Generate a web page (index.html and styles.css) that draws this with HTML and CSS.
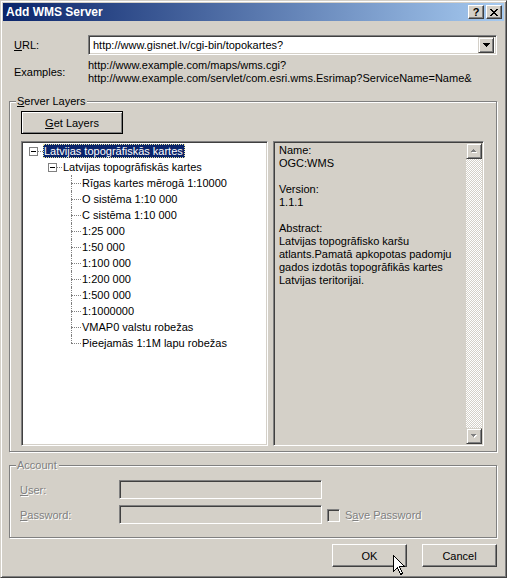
FILE: index.html
```html
<!DOCTYPE html>
<html>
<head>
<meta http-equiv="Content-Type" content="text/html; charset=UTF-8" />
<link rel="stylesheet" href="styles.css">
</head>

<body>

<div id="window">
	<div id="title-bar">
		<span id="title">Add WMS Server</span>
		<span class="title-button help-button">?</span>
		<span class="title-button">
			<svg width="8" height="7" viewBox="0 0 8 7" shape-rendering="crispEdges"><path d="M0 0h2v1h-2zM6 0h2v1h-2zM1 1h2v1h-2zM5 1h2v1h-2zM2 2h4v1h-4zM3 3h2v1h-2zM2 4h4v1h-4zM1 5h2v1h-2zM5 5h2v1h-2zM0 6h2v1h-2zM6 6h2v1h-2z" fill="#000"/></svg>
		</span>
	</div>

	<div id="dialog-body">
		<div id="url-row">
			<span class="row-label"><u>U</u>RL:</span>
			<div id="url-combo">
				<span id="url-text">http://www.gisnet.lv/cgi-bin/topokartes?</span>
				<span class="raised-button combo-button">
					<svg width="7" height="4" viewBox="0 0 7 4" shape-rendering="crispEdges"><path d="M0 0h7v1h-7zM1 1h5v1h-5zM2 2h3v1h-3zM3 3h1v1h-1z" fill="#000"/></svg>
				</span>
			</div>
		</div>

		<div id="examples-row">
			<span class="row-label">Examples:</span>
			<div id="examples">
				<div>http://www.example.com/maps/wms.cgi?</div>
				<div>http://www.example.com/servlet/com.esri.wms.Esrimap?ServiceName=Name&amp;</div>
			</div>
		</div>

		<div class="group" id="server-group">
			<span class="legend"><u>S</u>erver Layers</span>
			<button class="button" id="get-layers-button"><u>G</u>et Layers</button>
			<div id="panels">
				<div class="sunken" id="layer-tree">
					<div class="node">
						<span class="cell has-box"><span class="toggle"></span></span>
						<span class="node-label selected">Latvijas topogrāfiskās kartes</span>
					</div>
					<div class="node">
						<span class="cell"></span>
						<span class="cell has-box"><span class="toggle"></span></span>
						<span class="node-label">Latvijas topogrāfiskās kartes</span>
					</div>
					<div class="node">
						<span class="cell"></span><span class="cell"></span>
						<span class="cell branch first"></span>
						<span class="node-label">Rīgas kartes mērogā 1:10000</span>
					</div>
					<div class="node">
						<span class="cell"></span><span class="cell"></span>
						<span class="cell branch"></span>
						<span class="node-label">O sistēma 1:10 000</span>
					</div>
					<div class="node">
						<span class="cell"></span><span class="cell"></span>
						<span class="cell branch"></span>
						<span class="node-label">C sistēma 1:10 000</span>
					</div>
					<div class="node">
						<span class="cell"></span><span class="cell"></span>
						<span class="cell branch"></span>
						<span class="node-label">1:25 000</span>
					</div>
					<div class="node">
						<span class="cell"></span><span class="cell"></span>
						<span class="cell branch"></span>
						<span class="node-label">1:50 000</span>
					</div>
					<div class="node">
						<span class="cell"></span><span class="cell"></span>
						<span class="cell branch"></span>
						<span class="node-label">1:100 000</span>
					</div>
					<div class="node">
						<span class="cell"></span><span class="cell"></span>
						<span class="cell branch"></span>
						<span class="node-label">1:200 000</span>
					</div>
					<div class="node">
						<span class="cell"></span><span class="cell"></span>
						<span class="cell branch"></span>
						<span class="node-label">1:500 000</span>
					</div>
					<div class="node">
						<span class="cell"></span><span class="cell"></span>
						<span class="cell branch"></span>
						<span class="node-label">1:1000000</span>
					</div>
					<div class="node">
						<span class="cell"></span><span class="cell"></span>
						<span class="cell branch"></span>
						<span class="node-label">VMAP0 valstu robežas</span>
					</div>
					<div class="node">
						<span class="cell"></span><span class="cell"></span>
						<span class="cell branch last"></span>
						<span class="node-label">Pieejamās 1:1M lapu robežas</span>
					</div>
				</div>

				<div class="sunken" id="layer-info">
					<div id="info-text">
						Name:<br>
						OGC:WMS<br>
						<br>
						Version:<br>
						1.1.1<br>
						<br>
						Abstract:<br>
						Latvijas topogrāfisko karšu<br>
						atlants.Pamatā apkopotas padomju<br>
						gados izdotās topogrāfikās kartes<br>
						Latvijas teritorijai.
					</div>
					<div id="scrollbar">
						<span class="raised-button scroll-button">
							<svg width="8" height="5" viewBox="0 0 8 5" shape-rendering="crispEdges"><path d="M4 1h1v1h-1zM3 2h3v1h-3zM2 3h5v1h-5z" fill="#fff"/><path d="M3 0h1v1h-1zM2 1h3v1h-3zM1 2h5v1h-5z" fill="#808080"/></svg>
						</span>
						<span id="scroll-track"></span>
						<span class="raised-button scroll-button">
							<svg width="8" height="5" viewBox="0 0 8 5" shape-rendering="crispEdges"><path d="M2 1h5v1h-5zM3 2h3v1h-3zM4 3h1v1h-1z" fill="#fff"/><path d="M1 0h5v1h-5zM2 1h3v1h-3zM3 2h1v1h-1z" fill="#808080"/></svg>
						</span>
					</div>
				</div>
			</div>
		</div>

		<div class="group disabled" id="account-group">
			<span class="legend">Account</span>
			<div class="account-row">
				<span class="account-label"><u>U</u>ser:</span>
				<span class="text-field"></span>
			</div>
			<div class="account-row">
				<span class="account-label"><u>P</u>assword:</span>
				<span class="text-field"></span>
				<span class="checkbox"></span>
				<span class="checkbox-label">S<u>a</u>ve Password</span>
			</div>
		</div>

		<div id="dialog-buttons">
			<button class="button dialog-button">OK</button>
			<button class="button dialog-button">Cancel</button>
		</div>
	</div>

	<!-- mouse pointer resting on the OK button -->
	<svg id="pointer" width="13" height="22" viewBox="0 0 13 22" shape-rendering="crispEdges">
		<path d="M0.5 0.5V16.5L4.5 12.5L7.5 19.5L9.5 18.5L6.5 11.5H11.5Z" fill="#fff" stroke="#000" stroke-width="1"/>
	</svg>
</div>

</body>
</html>
```

FILE: styles.css
```css
body {
	margin: 0;
	font-family: "Liberation Sans", Arial, sans-serif;
	font-size: 11px;
	color: #000000;
	background-color: #d4d0c8;
}

#window {
	position: relative;
	width: 507px;
	height: 578px;
	box-sizing: border-box;
	border: 1px solid;
	border-color: #d4d0c8 #404040 #404040 #d4d0c8;
	box-shadow: inset 1px 1px #ffffff, inset -1px -1px #808080;
	padding: 2px;
	background-color: #d4d0c8;
	display: flex;
	flex-direction: column;
}

/* Title bar */

#title-bar {
	height: 18px;
	display: flex;
	align-items: center;
	padding: 0 2px 0 3px;
	background: linear-gradient(to right, #0a246a, #a6caf0);
}

#title {
	flex: 1;
	color: #ffffff;
	font-weight: bold;
	font-size: 12px;
}

.title-button {
	width: 16px;
	height: 14px;
	box-sizing: border-box;
	margin-left: 2px;
	border: 1px solid;
	border-color: #ffffff #404040 #404040 #ffffff;
	box-shadow: inset -1px -1px #808080;
	background-color: #d4d0c8;
	display: flex;
	align-items: center;
	justify-content: center;
}

.help-button {
	font-weight: bold;
	font-size: 11px;
	line-height: 12px;
}

/* Dialog body */

#dialog-body {
	flex: 1;
	padding: 0 7px 0 6px;
}

.row-label {
	width: 74px;
	padding-left: 5px;
	flex: none;
}

#url-row {
	display: flex;
	align-items: center;
	margin-top: 14px;
}

#url-combo {
	flex: 1;
	height: 20px;
	box-sizing: border-box;
	border: 1px solid;
	border-color: #808080 #ffffff #ffffff #808080;
	box-shadow: inset 1px 1px #404040, inset -1px -1px #d4d0c8;
	background-color: #ffffff;
	display: flex;
	align-items: center;
	padding: 2px 2px 2px 4px;
}

#url-text {
	flex: 1;
}

.raised-button {
	box-sizing: border-box;
	border: 1px solid;
	border-color: #d4d0c8 #404040 #404040 #d4d0c8;
	box-shadow: inset 1px 1px #ffffff, inset -1px -1px #808080;
	background-color: #d4d0c8;
	display: flex;
	align-items: center;
	justify-content: center;
}

.combo-button {
	width: 16px;
	height: 16px;
}

#examples-row {
	display: flex;
	align-items: center;
	margin-top: 4px;
	line-height: 13px;
}

/* Group boxes */

.group {
	position: relative;
	border: 1px solid #808080;
	box-shadow: inset 1px 1px #ffffff, 1px 1px #ffffff;
}

.legend {
	position: absolute;
	top: -7px;
	left: 6px;
	padding: 0 2px 0 1px;
	line-height: 13px;
	background-color: #d4d0c8;
}

#server-group {
	margin-top: 16px;
	padding: 9px 12px 5px 11px;
}

.button {
	font-family: inherit;
	font-size: inherit;
	color: #000000;
	height: 23px;
	padding: 0;
	box-sizing: border-box;
	border: 1px solid;
	border-color: #ffffff #404040 #404040 #ffffff;
	box-shadow: inset -1px -1px #808080;
	background-color: #d4d0c8;
	outline: none;
}

#get-layers-button {
	display: block;
	width: 102px;
	border: 1px solid #000000;
	box-shadow: inset 1px 1px #ffffff, inset -1px -1px #808080;
}

#panels {
	display: flex;
	gap: 5px;
	margin-top: 7px;
	height: 305px;
}

.sunken {
	box-sizing: border-box;
	border: 1px solid;
	border-color: #808080 #ffffff #ffffff #808080;
	box-shadow: inset 1px 1px #404040, inset -1px -1px #d4d0c8;
	padding: 1px;
}

/* Layer tree */

#layer-tree {
	width: 247px;
	background-color: #ffffff;
	padding: 1px 1px 1px 2px;
}

.node {
	display: flex;
	height: 16px;
}

.cell {
	position: relative;
	width: 19px;
	height: 16px;
	flex: none;
}

.cell.has-box::after,
.cell.branch::after {
	content: "";
	position: absolute;
	left: 9px;
	top: 8px;
	width: 10px;
	border-top: 1px dotted #808080;
}

.cell.branch::before {
	content: "";
	position: absolute;
	left: 9px;
	top: 0;
	bottom: 0;
	border-left: 1px dotted #808080;
}

.cell.branch.first::before {
	top: 0;
}

.cell.branch.last::before {
	bottom: 8px;
}

.toggle {
	position: absolute;
	left: 5px;
	top: 4px;
	width: 9px;
	height: 9px;
	box-sizing: border-box;
	border: 1px solid #808080;
	background-color: #ffffff;
	z-index: 1;
}

.toggle::after {
	content: "";
	position: absolute;
	left: 1px;
	top: 3px;
	width: 5px;
	height: 1px;
	background-color: #000000;
}

.node-label {
	height: 14px;
	line-height: 14px;
	margin-top: 1px;
	padding: 0 2px 0 1px;
	white-space: nowrap;
}

.node-label.selected {
	background-color: #0a246a;
	color: #ffffff;
	outline: 1px dotted #e8e4a0;
	outline-offset: -1px;
}

/* Layer information */

#layer-info {
	flex: 1;
	display: flex;
}

#info-text {
	flex: 1;
	padding: 1px 0 0 4px;
	line-height: 13px;
}

#scrollbar {
	width: 16px;
	display: flex;
	flex-direction: column;
}

.scroll-button {
	height: 16px;
	flex: none;
}

#scroll-track {
	flex: 1;
	background: repeating-conic-gradient(#ffffff 0 25%, #d4d0c8 0 50%) 0 0 / 2px 2px;
}

/* Account */

#account-group {
	margin-top: 13px;
	padding: 14px 10px 13px 10px;
}

.disabled {
	color: #808080;
	text-shadow: 1px 1px #ffffff;
}

.account-row {
	display: flex;
	align-items: center;
	height: 19px;
}

.account-row + .account-row {
	margin-top: 6px;
}

.account-label {
	width: 99px;
	flex: none;
}

.text-field {
	width: 203px;
	height: 19px;
	box-sizing: border-box;
	border: 1px solid;
	border-color: #808080 #ffffff #ffffff #808080;
	box-shadow: inset 1px 1px #404040, inset -1px -1px #d4d0c8;
	background-color: #d4d0c8;
}

.checkbox {
	width: 13px;
	height: 13px;
	box-sizing: border-box;
	margin: 1px 5px 0 5px;
	border: 1px solid;
	border-color: #808080 #ffffff #ffffff #808080;
	box-shadow: inset 1px 1px #404040, inset -1px -1px #d4d0c8;
	background-color: #d4d0c8;
}

/* Bottom buttons */

#dialog-buttons {
	display: flex;
	justify-content: flex-end;
	gap: 15px;
	margin-top: 6px;
}

.dialog-button {
	width: 75px;
}

#pointer {
	position: absolute;
	left: 392px;
	top: 554px;
}
```
